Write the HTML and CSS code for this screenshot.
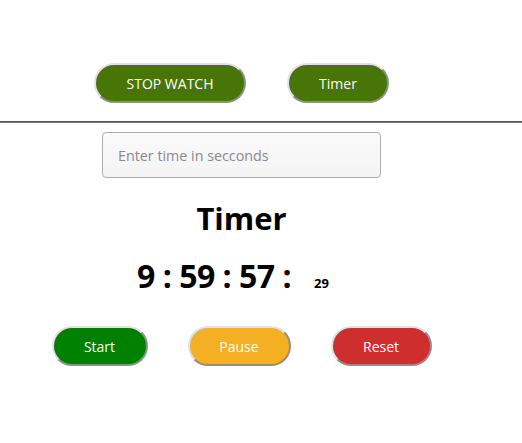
FILE: index.html
```html
<!DOCTYPE html>
<html lang="en">
<head>
<meta charset="utf-8">
<title>Timer</title>
<link rel="stylesheet" href="styles.css">
</head>
<body>
  <div class="wrap">
    <nav class="nav">
      <button class="btn btn-nav btn-stopwatch">STOP WATCH</button>
      <button class="btn btn-nav btn-timer">Timer</button>
    </nav>
  </div>
  <hr class="divider">
  <main class="wrap timer">
    <input class="seconds" type="text" placeholder="Enter time in secconds">
    <h1 class="title">Timer</h1>
    <div class="clock">
      <span class="clock-main">9 : 59 : 57 :</span>
      <span class="clock-ms">29</span>
    </div>
    <div class="controls">
      <button class="btn btn-start">Start</button>
      <button class="btn btn-pause">Pause</button>
      <button class="btn btn-reset">Reset</button>
    </div>
  </main>
</body>
</html>
```
FILE: styles.css
```css
html, body {
  margin: 0;
  padding: 0;
  background: #ffffff;
}

body {
  font-family: "Open Sans", "Noto Sans", sans-serif;
  color: #000;
}

.wrap {
  width: 483px;
  display: flex;
  flex-direction: column;
  align-items: center;
}

.nav {
  display: flex;
  gap: 41px;
  padding-top: 63px;
}

.btn {
  box-sizing: border-box;
  height: 40px;
  border-radius: 20px;
  border-width: 2px;
  border-style: solid;
  border-color: #e2e2e2 #8e8e8e #8e8e8e #e2e2e2;
  color: #ffffff;
  font-family: "Open Sans", "Noto Sans", sans-serif;
  font-size: 14px;
  padding: 0;
  cursor: pointer;
}

.btn-nav {
  background: #477507;
}

.btn-stopwatch { width: 152px; }
.btn-timer { width: 102px; }

.divider {
  margin: 18px 0 0 0;
  border: 0;
  border-top: 1px solid #555555;
  border-bottom: 1px solid #7a7a7a;
  height: 0;
}

.seconds {
  box-sizing: border-box;
  margin-top: 9px;
  width: 279px;
  height: 46px;
  border: 1px solid #adadad;
  border-radius: 4px;
  padding: 0 15px;
  background: linear-gradient(#fafafa, #f4f4f4);
  font-family: "Open Sans", "Noto Sans", sans-serif;
  font-size: 14.3px;
  color: #333;
}

.seconds::placeholder {
  color: #8a8a8a;
}

.title {
  margin: 20px 0 0 0;
  font-size: 31px;
  line-height: 40px;
  font-weight: 700;
}

.clock {
  margin-top: 18px;
  display: flex;
  align-items: baseline;
  line-height: 40px;
  font-weight: 700;
  padding-right: 17px;
}

.clock-main {
  font-size: 32px;
  letter-spacing: -0.5px;
}

.clock-ms {
  font-size: 13px;
  margin-left: 23px;
}

.controls {
  margin-top: 23px;
  display: flex;
  gap: 40px;
}

.btn-start { width: 96px; background: #008000; }
.btn-pause { width: 103px; background: #f4b022; }
.btn-reset { width: 101px; background: #cf2e2e; }
```
